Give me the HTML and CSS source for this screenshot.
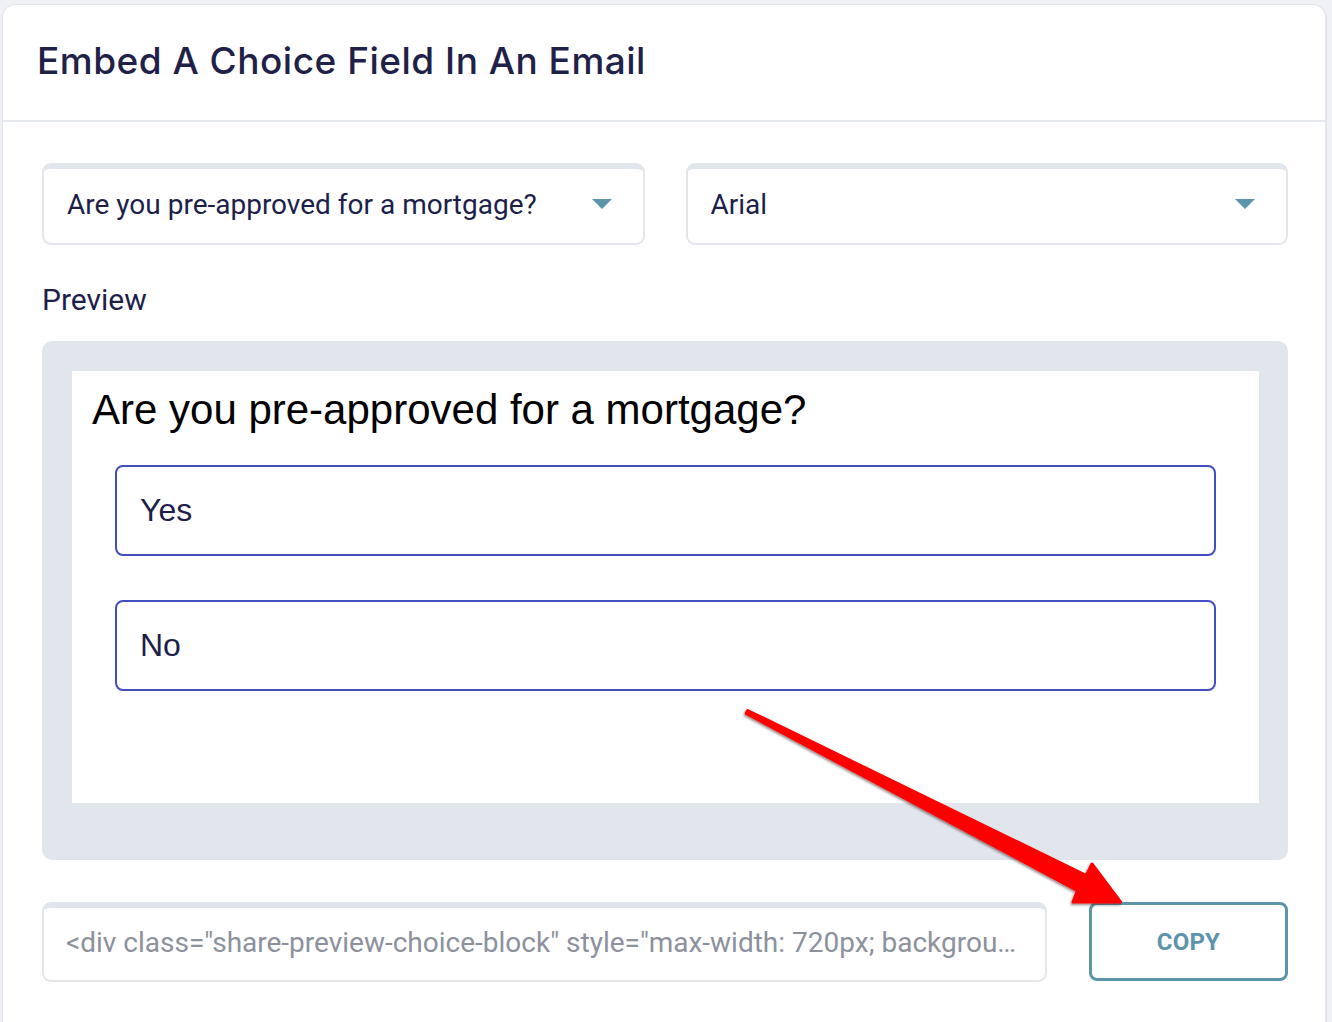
FILE: index.html
```html
<!DOCTYPE html>
<html lang="en">
<head>
<meta charset="utf-8">
<title>Embed A Choice Field In An Email</title>
<link rel="stylesheet" href="styles.css">
</head>
<body>
<div class="card">
  <div class="card-header">
    <h1 class="title">Embed A Choice Field In An Email</h1>
  </div>
  <div class="card-body">
    <div class="selects">
      <div class="select">
        <span class="select-text">Are you pre-approved for a mortgage?</span>
        <span class="caret"></span>
      </div>
      <div class="select">
        <span class="select-text">Arial</span>
        <span class="caret"></span>
      </div>
    </div>
    <div class="label">Preview</div>
    <div class="preview">
      <div class="preview-inner">
        <div class="question">Are you pre-approved for a mortgage?</div>
        <div class="option">Yes</div>
        <div class="option">No</div>
      </div>
    </div>
    <div class="bottom-row">
      <div class="code-field"><span class="code-text">&lt;div class="share-preview-choice-block" style="max-width: 720px; backgrou…</span></div>
      <button class="copy-btn">COPY</button>
    </div>
  </div>
</div>
<svg class="arrow" width="1332" height="1022" viewBox="0 0 1332 1022" xmlns="http://www.w3.org/2000/svg">
  <defs>
    <filter id="sh" x="-10%" y="-10%" width="120%" height="120%">
      <feDropShadow dx="-1" dy="1.5" stdDeviation="0.8" flood-color="#3a2020" flood-opacity="0.55"/>
    </filter>
  </defs>
  <polygon filter="url(#sh)" points="747.7,710.5 1086.4,875.5 1092,864 1120.5,902 1073,902 1077.6,890.6 746.3,713.5" fill="#ff0000" stroke="#ff0000" stroke-width="3" stroke-linejoin="round"/>
</svg>
</body>
</html>
```
FILE: styles.css
```css
html, body {
  margin: 0;
  padding: 0;
}
body {
  background: #eef0f3;
  width: 1332px;
  height: 1022px;
  overflow: hidden;
  position: relative;
  font-family: Roboto, "Liberation Sans", Arial, sans-serif;
}
.card {
  box-sizing: border-box;
  margin: 4px 0 0 2px;
  width: 1325px;
  height: 1040px;
  background: #ffffff;
  border: 1px solid #e3e7ec;
  border-right-width: 2px;
  border-radius: 14px;
}
.card-header {
  height: 115px;
  display: flex;
  align-items: center;
  padding-left: 34px;
  border-bottom: 2px solid #e5e8ed;
}
.title {
  margin: 0;
  font-family: Inter, "Open Sans", sans-serif;
  font-weight: 500;
  font-size: 37px;
  color: #1f2149;
  letter-spacing: 0.5px;
  padding-bottom: 4px;
}
.card-body {
  padding: 41px 37px 0 39px;
}
.selects {
  display: grid;
  grid-template-columns: 1fr 1fr;
  column-gap: 41px;
}
.select {
  box-sizing: border-box;
  height: 82px;
  border: 2px solid #e3e7ec;
  border-top: 6px solid #e1e6ed;
  border-radius: 9px;
  display: flex;
  align-items: center;
  justify-content: space-between;
  padding: 0 31px 4px 23px;
}
.select-text {
  font-family: Roboto, sans-serif;
  font-size: 28px;
  color: #1d1f4a;
}
.caret {
  width: 0;
  height: 0;
  border-left: 10px solid transparent;
  border-right: 10px solid transparent;
  border-top: 10px solid #5b94ab;
}
.label {
  margin: 37px 0 23px 0;
  height: 36px;
  line-height: 36px;
  font-family: Roboto, sans-serif;
  font-size: 30px;
  color: #1d1f4a;
}
.preview {
  background: #e1e6ed;
  border-radius: 10px;
  padding: 30px 29px 57px 30px;
}
.preview-inner {
  box-sizing: border-box;
  height: 432px;
  background: #ffffff;
  padding: 15px 43px 0 43px;
}
.question {
  margin-left: -23px;
  font-family: "Liberation Sans", Arial, sans-serif;
  font-size: 42px;
  line-height: 48px;
  color: #000000;
}
.option {
  box-sizing: border-box;
  height: 91px;
  border: 2px solid #454dc2;
  border-radius: 8px;
  display: flex;
  align-items: center;
  padding-left: 23px;
  font-family: "Liberation Sans", Arial, sans-serif;
  font-size: 32px;
  color: #1d1f4a;
  margin-top: 44px;
}
.question + .option {
  margin-top: 31px;
}
.bottom-row {
  margin-top: 42px;
  display: flex;
  gap: 42px;
  align-items: flex-start;
}
.code-field {
  box-sizing: border-box;
  flex: 1;
  min-width: 0;
  height: 80px;
  border: 2px solid #e3e7ec;
  border-top: 6px solid #e1e6ed;
  border-radius: 9px;
  padding: 0 20px 4px 22px;
  display: flex;
  align-items: center;
}
.code-text {
  font-family: Roboto, sans-serif;
  font-size: 28px;
  color: #8c919d;
  white-space: nowrap;
}
.copy-btn {
  box-sizing: border-box;
  width: 199px;
  height: 79px;
  background: #ffffff;
  border: 3px solid #5b94ab;
  border-radius: 8px;
  font-family: Roboto, sans-serif;
  font-weight: 700;
  font-size: 24px;
  color: #5b94ab;
  letter-spacing: 0.2px;
  padding: 0;
}
.arrow {
  position: absolute;
  left: 0;
  top: 0;
  pointer-events: none;
}
```
